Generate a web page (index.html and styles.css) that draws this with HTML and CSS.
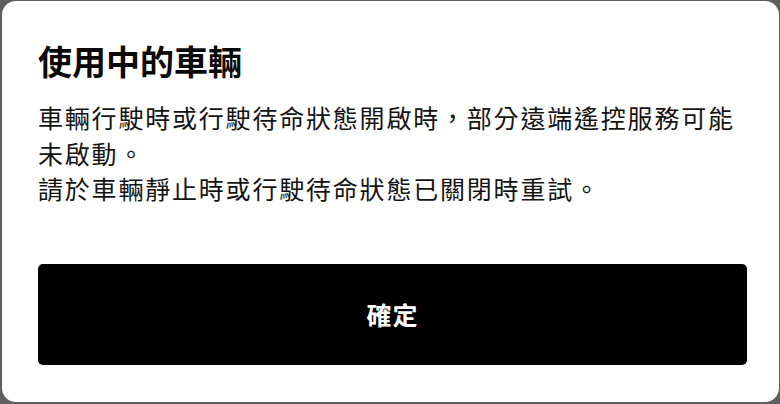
FILE: index.html
```html
<!DOCTYPE html>
<html lang="zh-Hant">
<head>
<meta charset="utf-8">
<link rel="stylesheet" href="styles.css">
</head>
<body>
<div class="dialog">
  <h1 class="title">使用中的車輛</h1>
  <p class="message">車輛行駛時或行駛待命狀態開啟時，部分遠端遙控服務可能未啟動。<br>請於車輛靜止時或行駛待命狀態已關閉時重試。</p>
  <button class="ok">確定</button>
</div>
</body>
</html>
```
FILE: styles.css
```css
html, body {
  margin: 0;
  padding: 0;
  width: 780px;
  height: 404px;
  background: #5e5e5e;
  overflow: hidden;
}
.dialog {
  box-sizing: border-box;
  margin: 1px 1px 0 2px;
  height: 401px;
  background: #ffffff;
  border-radius: 14px;
  padding: 39px 32px 0 36px;
  font-family: "Noto Sans CJK TC", "Noto Sans", sans-serif;
  color: #111111;
  display: flex;
  flex-direction: column;
}
.title {
  margin: 0;
  font-size: 34px;
  line-height: 42px;
  font-weight: 700;
  color: #0a0a0a;
}
.message {
  margin: 18px 0 0 0;
  font-size: 25px;
  line-height: 35.5px;
  letter-spacing: 1.8px;
  font-weight: 400;
  color: #141414;
}
.ok {
  margin-top: 57px;
  height: 101px;
  border: none;
  border-radius: 5px;
  background: #000000;
  color: #ffffff;
  font-family: "Noto Sans CJK TC", "Noto Sans", sans-serif;
  font-size: 25px;
  font-weight: 700;
  letter-spacing: 1px;
}
```
